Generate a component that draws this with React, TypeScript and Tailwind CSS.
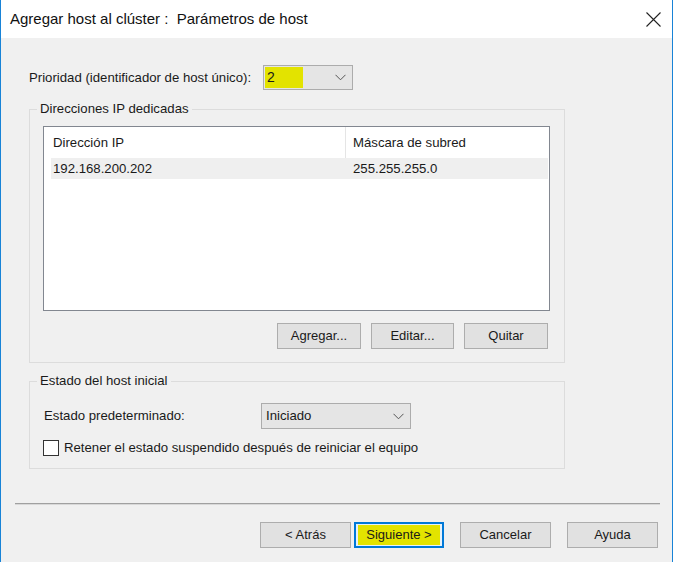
import React from 'react';

const font = { fontFamily: '"Liberation Sans", Arial, sans-serif' };

function Chevron() {
  return (
    <svg width="11" height="7" viewBox="0 0 11 7" className="shrink-0">
      <polyline points="0.5,0.8 5.5,5.8 10.5,0.8" fill="none" stroke="#555" strokeWidth="1" />
    </svg>
  );
}

function WinButton({ label, className = '', children }: { label?: string; className?: string; children?: React.ReactNode }) {
  return (
    <button
      type="button"
      className={
        'flex h-[26px] items-center justify-center border border-[#adadad] bg-[#e1e1e1] text-[13px] text-[#1a1a1a] ' +
        className
      }
    >
      {children ?? label}
    </button>
  );
}

export default function App() {
  return (
    <div className="h-[562px] w-[675px] overflow-hidden bg-white text-[13.2px] text-[#1a1a1a]" style={font}>
      <div className="flex h-[562px] w-[673px] flex-col border-x border-[#1883d7]">
        {/* title bar */}
        <div className="flex h-[38px] shrink-0 items-center justify-between bg-white pl-[9px] pr-[11px]">
          <span className="text-[15px] text-[#111]">
            Agregar host al clúster :&nbsp; Parámetros de host
          </span>
          <svg width="15" height="15" viewBox="0 0 15 15">
            <path d="M0.5 0.5 L14.5 14.5 M14.5 0.5 L0.5 14.5" stroke="#222" strokeWidth="1.1" />
          </svg>
        </div>

        <div className="flex flex-1 flex-col bg-[#f0f0f0]">
          <div className="pl-[28px]">
            {/* priority */}
            <div className="mt-[27px] flex h-[25px] items-center">
              <span className="w-[234px]">Prioridad (identificador de host único):</span>
              <div className="flex h-[25px] w-[90px] items-center justify-between border border-[#acacac] bg-[#e5e5e5] pr-[6px]">
                <span className="ml-[1px] flex h-[21px] w-[38px] items-center bg-[#e3e300] pl-[2px] text-[14px]">2</span>
                <Chevron />
              </div>
            </div>

            {/* dedicated IPs */}
            <fieldset className="mt-[11px] h-[262px] w-[536px] border border-[#dcdcdc] pl-[13px]">
              <legend className="ml-[-6px] h-[16px] px-[3px] leading-[16px]">Direcciones IP dedicadas</legend>
              <div className="mt-[9px] flex h-[185px] w-[507px] flex-col border border-[#828790] bg-white pl-[7px] pr-[1px]">
                <div className="flex h-[31px] items-center">
                  <span className="w-[294px] pl-[2px]">Dirección IP</span>
                  <div className="h-[31px] w-px bg-[#e5e5e5]" />
                  <span className="pl-[7px]">Máscara de subred</span>
                </div>
                <div className="flex h-[21px] items-center bg-[#efefef]">
                  <span className="w-[302px] pl-[2px]">192.168.200.202</span>
                  <span>255.255.255.0</span>
                </div>
              </div>
              <div className="mt-[12px] flex w-[505px] justify-end gap-[10px]">
                <WinButton label="Agregar..." className="w-[84px]" />
                <WinButton label="Editar..." className="w-[83px]" />
                <WinButton label="Quitar" className="w-[84px]" />
              </div>
            </fieldset>

            {/* initial state */}
            <fieldset className="mt-[10px] h-[96px] w-[536px] border border-[#dcdcdc] pl-[14px]">
              <legend className="ml-[-7px] h-[16px] px-[3px] leading-[16px]">Estado del host inicial</legend>
              <div className="mt-[14px] flex h-[26px] items-center">
                <span className="w-[217px]">Estado predeterminado:</span>
                <div className="flex h-[26px] w-[150px] items-center justify-between border border-[#acacac] bg-[#e5e5e5] pl-[4px] pr-[6px]">
                  <span>Iniciado</span>
                  <Chevron />
                </div>
              </div>
              <label className="ml-[-1px] mt-[9px] flex items-center gap-[5px]">
                <span className="h-[16px] w-[16px] border border-[#333] bg-white" />
                <span>Retener el estado suspendido después de reiniciar el equipo</span>
              </label>
            </fieldset>
          </div>

          {/* separator */}
          <div className="ml-[14px] mt-[34px] w-[645px]">
            <div className="h-px bg-[#a0a0a0]" />
            <div className="h-px bg-[#d8d8d8]" />
          </div>

          {/* wizard buttons */}
          <div className="mt-[17px] flex pl-[259px]">
            <WinButton label="< Atrás" className="w-[91px]" />
            <button
              type="button"
              className="ml-[3px] flex h-[26px] w-[90px] items-center justify-center border-2 border-[#0078d7] bg-[#e5f1fb] text-[13px]"
            >
              <span className="flex h-[20px] w-[82px] items-center justify-center bg-[#e3e300]">Siguiente &gt;</span>
            </button>
            <WinButton label="Cancelar" className="ml-[16px] w-[91px]" />
            <WinButton label="Ayuda" className="ml-[16px] w-[91px]" />
          </div>
        </div>
      </div>
    </div>
  );
}
